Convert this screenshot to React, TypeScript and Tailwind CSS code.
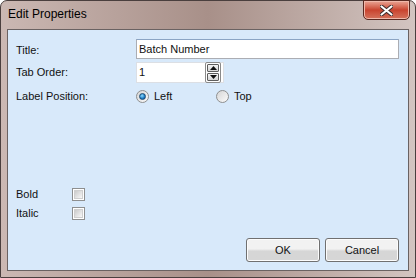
import React from "react";

function Checkbox() {
  return (
    <span className="block h-[13px] w-[13px] border border-[#8e8f8f] bg-white p-[1px]">
      <span className="block h-full w-full border border-[#cfcfcf] bg-gradient-to-br from-[#cbcbcb] to-[#f8f8f8]" />
    </span>
  );
}

function Radio({ checked }: { checked?: boolean }) {
  return (
    <span className="flex h-[13px] w-[13px] items-center justify-center rounded-full border border-[#8e8f8f] bg-gradient-to-br from-[#d6d6d6] to-[#fbfbfb]">
      {checked && (
        <span className="block h-[7px] w-[7px] rounded-full border border-[#1b4a72] bg-[radial-gradient(circle_at_40%_35%,#8fdcff,#1a7ac4_60%,#0e4f8a)]" />
      )}
    </span>
  );
}

function Spin({ up }: { up?: boolean }) {
  return (
    <span className="flex h-[8px] w-[12px] items-center justify-center rounded-[1px] border border-[#5d5d5d] bg-gradient-to-b from-[#f4f4f4] to-[#d5d5d5]">
      <svg width="7" height="4" viewBox="0 0 7 4">
        <path d={up ? "M0 4 L3.5 0 L7 4 Z" : "M0 0 L3.5 4 L7 0 Z"} fill="#111" />
      </svg>
    </span>
  );
}

function Button({ label }: { label: string }) {
  return (
    <button className="flex h-[24px] w-[74px] items-center justify-center rounded-[3px] border border-[#707070] bg-gradient-to-b from-[#f2f2f2] from-45% to-[#d6d6d6] to-55% text-[11px] text-[#111] shadow-[inset_0_0_0_1px_#fcfcfc]">
      {label}
    </button>
  );
}

export default function App() {
  return (
    <div
      className="flex h-[278px] w-[416px] flex-col rounded-t-[7px] border border-[#4a3f3e] bg-gradient-to-r from-[#cbb8b3] via-[#a89089] to-[#d3c5c1] px-[6px] pb-[6px] text-[#111]"
      style={{ fontFamily: '"Liberation Sans", Arial, sans-serif' }}
    >
      <div className="flex h-[28px] shrink-0 items-start justify-between">
        <span className="pl-[1px] pt-[6px] text-[12px] leading-[14px] text-black">Edit Properties</span>
        <span className="mr-[-1px] mt-[-1px] flex h-[20px] w-[47px] items-center justify-center rounded-b-[5px] border border-[#5a2a22] bg-gradient-to-b from-[#e9a495] via-[#c9432f] to-[#d4725c] shadow-[inset_0_0_0_1px_#f0b8aa]">
          <svg width="13" height="11" viewBox="0 0 13 11">
            <path d="M1.5 1.5 L11.5 9.5 M11.5 1.5 L1.5 9.5" stroke="#3a2a2a" strokeWidth="4" strokeLinecap="round" />
            <path d="M1.5 1.5 L11.5 9.5 M11.5 1.5 L1.5 9.5" stroke="#fff" strokeWidth="2.2" strokeLinecap="round" />
          </svg>
        </span>
      </div>

      <div className="flex flex-1 flex-col border border-[#6a6262] bg-[#d8e9fa] pl-[8px] pr-[9px] pt-[9px] pb-[8px] text-[11px]">
        <div className="flex h-[20px] items-center">
          <span className="w-[120px] pt-[2px]">Title:</span>
          <div className="flex h-[20px] flex-1 items-center border border-[#abadb3] border-t-[#8aa4c4] bg-white pl-[2px]">
            Batch Number
          </div>
        </div>

        <div className="mt-[3px] flex h-[21px] items-center">
          <span className="w-[120px]">Tab Order:</span>
          <div className="flex h-[21px] w-[88px] items-center justify-between border border-[#dcdfe4] bg-white pl-[2px] pr-[2px]">
            <span>1</span>
            <span className="flex flex-col gap-[1px] rounded-[2px] border border-[#8a8a8a] p-[1px]">
              <Spin up />
              <Spin />
            </span>
          </div>
        </div>

        <div className="mt-[4px] flex h-[18px] items-center">
          <span className="w-[120px]">Label Position:</span>
          <span className="flex w-[80px] items-center gap-[5px]">
            <Radio checked />
            Left
          </span>
          <span className="flex items-center gap-[5px]">
            <Radio />
            Top
          </span>
        </div>

        <div className="mt-[81px] flex h-[16px] items-center">
          <span className="w-[56px]">Bold</span>
          <Checkbox />
        </div>
        <div className="mt-[3px] flex h-[16px] items-center">
          <span className="w-[56px]">Italic</span>
          <Checkbox />
        </div>

        <div className="mt-auto flex justify-end gap-[5px]">
          <Button label="OK" />
          <Button label="Cancel" />
        </div>
      </div>
    </div>
  );
}
